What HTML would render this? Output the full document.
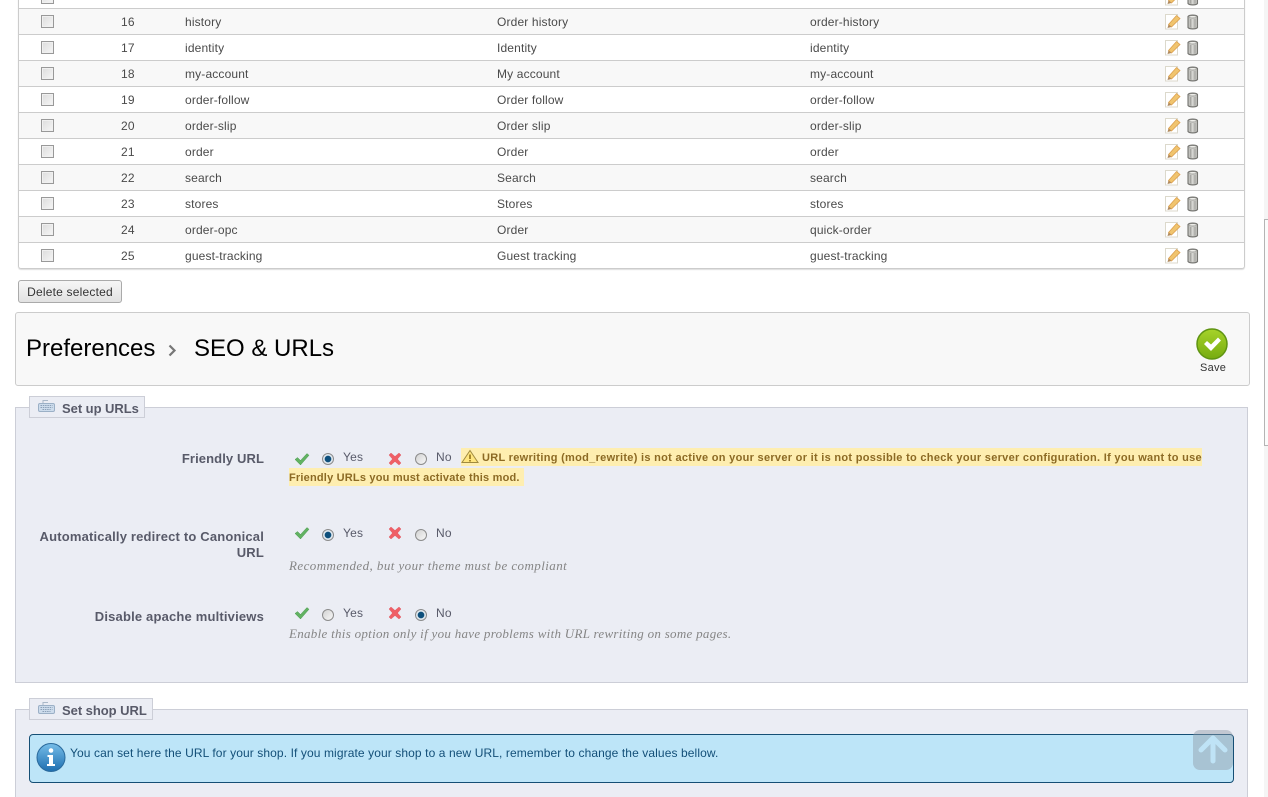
<!DOCTYPE html>
<html><head><meta charset="utf-8"><title>SEO &amp; URLs</title>
<style>
html,body{margin:0;padding:0;background:#fff;height:797px;overflow:hidden}
body{width:1268px;position:relative;font-family:"Liberation Sans",Arial,sans-serif;color:#444}
.a{position:absolute;white-space:nowrap}
.tbl{position:absolute;left:18px;top:-18px;width:1225px;height:286px;border:1px solid #ccc;border-top:0;border-radius:0 0 3px 3px;box-shadow:0 1px 1px #ddd}
.r{position:absolute;left:0;width:1225px;height:25px;border-top:1px solid #ccc;font-size:12px;letter-spacing:.15px;color:#4a4a4a;line-height:26px}
.r.o{background:#f8f8f8}
.r span{position:absolute;top:0;white-space:nowrap}
.c1{left:102px}.c2{left:166px}.c3{left:478px}.c4{left:791px}
.cb{position:absolute;left:22px;top:6px;width:11px;height:11px;border:1px solid #999;background:linear-gradient(135deg,#dcdcdc,#f6f6f6);box-shadow:inset 0 0 0 1px #f0f0f0}
.r svg{position:absolute;top:5px}
.fs{position:absolute;left:15px;width:1231px;background:#ebedf4;border:1px solid #ccced7}
.lg{position:absolute;background:#ebedf4;border:1px solid #ccced7;font-weight:bold;font-size:13px;letter-spacing:-.04px;color:#585a69;height:20px;line-height:23px;box-sizing:content-box;white-space:nowrap}
.lb{position:absolute;right:1004px;text-align:right;font-weight:bold;font-size:13px;letter-spacing:.18px;color:#585a69;line-height:16px}
.t{position:absolute;font-size:12px;letter-spacing:.2px;color:#585a69;white-space:nowrap}
.h{position:absolute;font-family:"Liberation Serif",serif;font-style:italic;font-size:13px;color:#858585;white-space:nowrap}
.w{position:absolute;background:#feeeb0;color:#8c6a24;font-weight:bold;font-size:11px;white-space:nowrap}
.rad{position:absolute;width:10px;height:10px;border:1px solid #8c8c8c;border-radius:50%;background:linear-gradient(135deg,#d2d2d2,#f8f8f8)}
.rad.on{background:radial-gradient(circle,#0d4f7c 0 3px,#dfe8ef 3.6px 5px)}
</style></head><body>
<svg width="0" height="0" style="position:absolute"><defs>
<symbol id="ed" viewBox="0 0 16 16"><path d="M.5.5h12v14.500H.5z" fill="#fff" stroke="#dcd9cc"/><path d="M3.500 10.500L11.500 1.500l3.500 3L6.500 13z" fill="#f0c46e" stroke="#dc9f4e" stroke-width=".8"/><path d="M2.500 14l1-3.500 3 2.500z" fill="#b08a5e"/></symbol>
<symbol id="tr" viewBox="0 0 12 16"><path d="M1 2.500C2.500 .6 9 .6 10.500 2.500v11C9 15.400 2.500 15.400 1 13.500z" fill="#c0c0bc" stroke="#747470" stroke-width="1.100"/><ellipse cx="5.750" cy="2.800" rx="3.800" ry="1.100" fill="#eeeeea" stroke="#8a8a86" stroke-width=".5"/><path d="M3.500 5v8.500M8 5v8.500" stroke="#a6a6a2"/><path d="M5.750 5v9" stroke="#dedeDA"/></symbol>
<symbol id="ok" viewBox="0 0 16 14"><path d="M1 7.500l2.500-2 3 3L13 1.500l2 1.800-8.500 9.700z" fill="#62b262" stroke="#4f9e56" stroke-width=".5"/></symbol>
<symbol id="no" viewBox="0 0 14 14"><path d="M1 3l2-2 4 3.500L11 1l2 2-3.500 4L13 11l-2 2-4-3.500L3 13l-2-2 3.500-4z" fill="#ef5f66" stroke="#e0606a" stroke-width=".5"/></symbol>
<symbol id="kb" viewBox="0 0 18 14"><path d="M5 4V1.500h5" fill="none" stroke="#a9b8c8"/><rect x=".5" y="4.500" width="16" height="8" rx="1.500" fill="#cddcec" stroke="#9bb0c6"/><path d="M2.500 6.500h12M2.500 8.500h12M4.500 10.500h8" stroke="#8ba0b8" stroke-dasharray="1.500 .8"/></symbol>
</defs></svg>

<div class="tbl">
<div class="r" style="top:0"><i class="cb" style="top:8px"></i><svg style="left:1146px;top:7px" width="16" height="16"><use href="#ed"/></svg><svg style="left:1168px;top:7px" width="12" height="16"><use href="#tr"/></svg></div>
<div class="r o" style="top:26px"><i class="cb"></i><span class="c1">16</span><span class="c2">history</span><span class="c3">Order history</span><span class="c4">order-history</span><svg style="left:1146px" width="16" height="16"><use href="#ed"/></svg><svg style="left:1168px" width="12" height="16"><use href="#tr"/></svg></div>
<div class="r" style="top:52px"><i class="cb"></i><span class="c1">17</span><span class="c2">identity</span><span class="c3">Identity</span><span class="c4">identity</span><svg style="left:1146px" width="16" height="16"><use href="#ed"/></svg><svg style="left:1168px" width="12" height="16"><use href="#tr"/></svg></div>
<div class="r o" style="top:78px"><i class="cb"></i><span class="c1">18</span><span class="c2">my-account</span><span class="c3">My account</span><span class="c4">my-account</span><svg style="left:1146px" width="16" height="16"><use href="#ed"/></svg><svg style="left:1168px" width="12" height="16"><use href="#tr"/></svg></div>
<div class="r" style="top:104px"><i class="cb"></i><span class="c1">19</span><span class="c2">order-follow</span><span class="c3">Order follow</span><span class="c4">order-follow</span><svg style="left:1146px" width="16" height="16"><use href="#ed"/></svg><svg style="left:1168px" width="12" height="16"><use href="#tr"/></svg></div>
<div class="r o" style="top:130px"><i class="cb"></i><span class="c1">20</span><span class="c2">order-slip</span><span class="c3">Order slip</span><span class="c4">order-slip</span><svg style="left:1146px" width="16" height="16"><use href="#ed"/></svg><svg style="left:1168px" width="12" height="16"><use href="#tr"/></svg></div>
<div class="r" style="top:156px"><i class="cb"></i><span class="c1">21</span><span class="c2">order</span><span class="c3">Order</span><span class="c4">order</span><svg style="left:1146px" width="16" height="16"><use href="#ed"/></svg><svg style="left:1168px" width="12" height="16"><use href="#tr"/></svg></div>
<div class="r o" style="top:182px"><i class="cb"></i><span class="c1">22</span><span class="c2">search</span><span class="c3">Search</span><span class="c4">search</span><svg style="left:1146px" width="16" height="16"><use href="#ed"/></svg><svg style="left:1168px" width="12" height="16"><use href="#tr"/></svg></div>
<div class="r" style="top:208px"><i class="cb"></i><span class="c1">23</span><span class="c2">stores</span><span class="c3">Stores</span><span class="c4">stores</span><svg style="left:1146px" width="16" height="16"><use href="#ed"/></svg><svg style="left:1168px" width="12" height="16"><use href="#tr"/></svg></div>
<div class="r o" style="top:234px"><i class="cb"></i><span class="c1">24</span><span class="c2">order-opc</span><span class="c3">Order</span><span class="c4">quick-order</span><svg style="left:1146px" width="16" height="16"><use href="#ed"/></svg><svg style="left:1168px" width="12" height="16"><use href="#tr"/></svg></div>
<div class="r" style="top:260px"><i class="cb"></i><span class="c1">25</span><span class="c2">guest-tracking</span><span class="c3">Guest tracking</span><span class="c4">guest-tracking</span><svg style="left:1146px" width="16" height="16"><use href="#ed"/></svg><svg style="left:1168px" width="12" height="16"><use href="#tr"/></svg></div>
</div>

<div class="a" style="left:18px;top:280px;width:102px;height:21px;border:1px solid #aaa;border-radius:3px;background:linear-gradient(#f6f6f6,#e2e2e2);font-size:12px;letter-spacing:.2px;line-height:22px;text-align:center;color:#333">Delete selected</div>

<div class="a" style="left:15px;top:312px;width:1233px;height:72px;background:#f8f8f8;border:1px solid #ccc;border-radius:3px"></div>
<div class="a" style="left:26px;top:335px;font-size:24px;line-height:28px;color:#000">Preferences</div>
<svg class="a" style="left:168px;top:344px" width="9" height="13"><path d="M1.500 1.500L6.500 6.500l-5 5" fill="none" stroke="#777" stroke-width="2.200"/></svg>
<div class="a" style="left:194px;top:335px;font-size:24px;line-height:28px;color:#000">SEO &amp; URLs</div>
<svg class="a" style="left:1196px;top:328px" width="32" height="32" viewBox="0 0 32 32"><defs><linearGradient id="gg" x1="0" y1="0" x2="0" y2="1"><stop offset="0" stop-color="#a6d32a"/><stop offset="1" stop-color="#76ab10"/></linearGradient></defs><circle cx="16" cy="16" r="15" fill="url(#gg)" stroke="#5f9412" stroke-width="1.500"/><path d="M8 16l3-3 4 3.500 7-7 3 3-10 10.500z" fill="#fff"/></svg>
<div class="a" style="left:1200px;top:361px;font-size:11px;letter-spacing:.25px;line-height:14px;color:#333">Save</div>

<div class="fs" style="top:407px;height:274px"></div>
<div class="lg" style="left:29px;top:396px;width:114px"><svg style="position:absolute;left:8px;top:2px" width="18" height="14"><use href="#kb"/></svg><span style="position:absolute;left:32px">Set up URLs</span></div>

<div class="lb" style="top:451px;letter-spacing:.1px">Friendly URL</div>
<svg class="a" style="left:294px;top:452px" width="16" height="14"><use href="#ok"/></svg>
<i class="rad on" style="left:322px;top:453px"></i><div class="t" style="top:450px;left:343px">Yes</div>
<svg class="a" style="left:388px;top:452px" width="14" height="14"><use href="#no"/></svg>
<i class="rad" style="left:415px;top:453px"></i><div class="t" style="top:450px;left:436px">No</div>
<div class="w" style="left:461px;top:448px;width:741px;height:18px"><svg style="position:absolute;left:0;top:1px" width="18" height="15" viewBox="0 0 18 15"><path d="M9 1.500L17 13.500H1z" fill="#ffe680" stroke="#a08a40"/><path d="M9 5.500v4.500M9 11v1.500" stroke="#8c6a10" stroke-width="1.500"/></svg><span style="position:absolute;left:21px;top:3px;line-height:14px;letter-spacing:.295px">URL rewriting (mod_rewrite) is not active on your server or it is not possible to check your server configuration. If you want to use</span></div>
<div class="w" style="left:289px;top:468px;width:235px;height:18px;line-height:20px;letter-spacing:.2px">Friendly URLs you must activate this mod.</div>

<div class="lb" style="top:529px;width:240px">Automatically redirect to Canonical URL</div>
<svg class="a" style="left:294px;top:526px" width="16" height="14"><use href="#ok"/></svg>
<i class="rad on" style="left:322px;top:529px"></i><div class="t" style="top:526px;left:343px">Yes</div>
<svg class="a" style="left:388px;top:526px" width="14" height="14"><use href="#no"/></svg>
<i class="rad" style="left:415px;top:529px"></i><div class="t" style="top:526px;left:436px">No</div>
<div class="h" style="left:289px;top:558px;letter-spacing:.43px">Recommended, but your theme must be compliant</div>

<div class="lb" style="top:609px">Disable apache multiviews</div>
<svg class="a" style="left:294px;top:606px" width="16" height="14"><use href="#ok"/></svg>
<i class="rad" style="left:322px;top:609px"></i><div class="t" style="top:606px;left:343px">Yes</div>
<svg class="a" style="left:388px;top:606px" width="14" height="14"><use href="#no"/></svg>
<i class="rad on" style="left:415px;top:609px"></i><div class="t" style="top:606px;left:436px">No</div>
<div class="h" style="left:289px;top:626px;letter-spacing:.29px">Enable this option only if you have problems with URL rewriting on some pages.</div>

<div class="fs" style="top:709px;height:95px"></div>
<div class="lg" style="left:29px;top:698px;width:122px"><svg style="position:absolute;left:8px;top:2px" width="18" height="14"><use href="#kb"/></svg><span style="position:absolute;left:32px">Set shop URL</span></div>

<div class="a" style="left:29px;top:734px;width:1203px;height:47px;background:#bde5f8;border:1px solid #154f75;border-radius:4px"></div>
<svg class="a" style="left:36px;top:743px" width="30" height="30" viewBox="0 0 30 30"><defs><linearGradient id="bg" x1="0" y1="0" x2="0" y2="1"><stop offset="0" stop-color="#76bde8"/><stop offset="1" stop-color="#1e6eb0"/></linearGradient></defs><circle cx="15" cy="14.500" r="14" fill="url(#bg)" stroke="#2a6a9c"/><circle cx="15" cy="7.500" r="2.300" fill="#fff"/><path d="M11.500 12h5.500v9h2v2h-8v-2h2v-7h-1.500z" fill="#fff"/></svg>
<div class="a" style="left:70px;top:745px;font-size:12px;letter-spacing:.1px;line-height:16px;color:#134f78">You can set here the URL for your shop. If you migrate your shop to a new URL, remember to change the values bellow.</div>

<svg class="a" style="left:1193px;top:730px" width="40" height="40" viewBox="0 0 40 40"><rect width="40" height="40" rx="7" fill="#8f9aa6" opacity=".45"/><path d="M20 8L32 20M20 8L8 20M20 9v22" fill="none" stroke="#bfe3f6" stroke-width="5" stroke-linecap="round" stroke-linejoin="round"/></svg>

<div class="a" style="left:1264px;top:0;width:4px;height:797px;background:#f5f5f5"></div>
<div class="a" style="left:1264px;top:219px;width:4px;height:227px;background:#fbfbfb;border-left:1px solid #b4b4b4;border-top:1px solid #b4b4b4;border-bottom:1px solid #b4b4b4;box-sizing:border-box"></div>
</body></html>
